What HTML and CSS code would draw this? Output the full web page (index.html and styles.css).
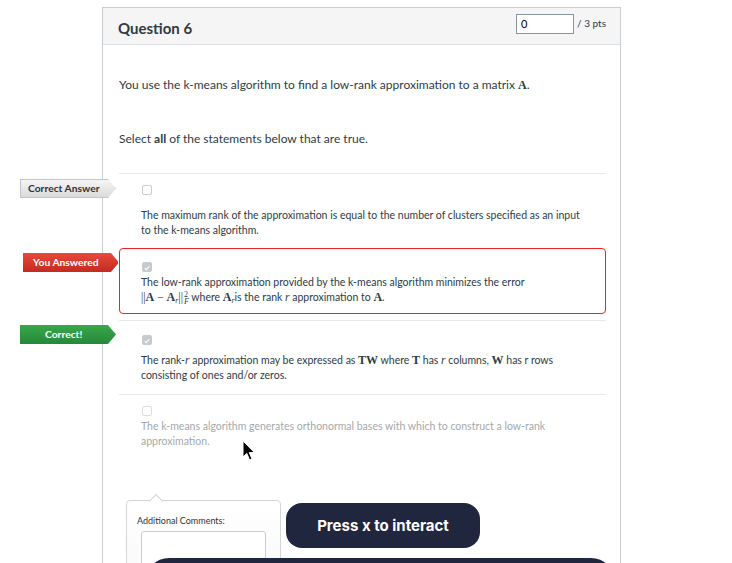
FILE: index.html
```html
<!DOCTYPE html>
<html>
<head>
<meta charset="utf-8">
<link rel="stylesheet" href="styles.css">
</head>
<body>
<div class="page">
  <div class="question">
    <div class="q-header">
      <span class="q-title">Question 6</span>
      <span class="q-points"><span class="pts-input">0</span><span class="pts-total">/ 3 pts</span></span>
    </div>
    <div class="q-body">
      <p class="q-text">You use the k-means algorithm to find a low-rank approximation to a matrix <b class="m">A</b>.</p>
      <p class="q-text q-select">Select <b>all</b> of the statements below that are true.</p>
      <div class="answers">
        <div class="answer a1">
          <span class="tag tag-grey">Correct Answer</span>
          <span class="cb"></span>
          <div class="a-text">The maximum rank of the approximation is equal to the number of clusters specified as an input to the k-means algorithm.</div>
        </div>
        <div class="answer a2 wrong">
          <span class="tag tag-red">You Answered</span>
          <span class="cb checked"><svg viewBox="0 0 10 10" width="10" height="10"><path d="M2.3 5.2 L4.2 7.1 L7.8 2.8" fill="none" stroke="#fff" stroke-width="1.3"/></svg></span>
          <div class="a-text">The low-rank approximation provided by the k-means algorithm minimizes the error<br><span class="m">||<b>A</b> − <b>A</b><sub class="i">r</sub>||<span class="supsub"><span class="ss">2</span><span class="ss i">F</span></span></span> where <b class="m">A</b><sub class="i">r</sub>is the rank <i class="m">r</i> approximation to <b class="m">A</b>.</div>
        </div>
        <div class="answer a3">
          <span class="tag tag-green">Correct!</span>
          <span class="cb checked"><svg viewBox="0 0 10 10" width="10" height="10"><path d="M2.3 5.2 L4.2 7.1 L7.8 2.8" fill="none" stroke="#fff" stroke-width="1.3"/></svg></span>
          <div class="a-text">The rank-<i class="m">r</i> approximation may be expressed as <b class="m">TW</b> where <b class="m">T</b> has <i class="m">r</i> columns, <b class="m">W</b> has r rows consisting of ones and/or zeros.</div>
        </div>
        <div class="answer a4 muted">
          <span class="cb"></span>
          <div class="a-text">The k-means algorithm generates orthonormal bases with which to construct a low-rank approximation.</div>
        </div>
      </div>
      <div class="comments">
        <div class="popover">
          <span class="popover-label">Additional Comments:</span>
          <div class="textarea"></div>
        </div>
        <div class="pill">Press x to interact</div>
        <div class="pill-wide"></div>
      </div>
    </div>
  </div>
  <svg class="cursor" width="14" height="22" viewBox="0 0 14 22"><path d="M1 1 L1 17 L4.8 13.4 L7.6 20 L10 19 L7.3 12.6 L12.5 12.6 Z" fill="#000" stroke="#fff" stroke-width="1"/></svg>
</div>
</body>
</html>
```

FILE: styles.css
```css
* { box-sizing: border-box; }
html, body { margin: 0; padding: 0; background: #fff; }
body { font-family: Lato, "Noto Sans", sans-serif; color: #2d3b45; width: 732px; height: 563px; overflow: hidden; }
.page { position: relative; padding: 7px 0 0 102px; height: 563px; overflow: hidden; }
.question { width: 519px; height: 600px; border: 1px solid #c7cdd1; border-bottom: none; }
.q-header { height: 37px; background: #f5f5f5; border-bottom: 1px solid #dcdfe2; display: flex; justify-content: space-between; align-items: flex-start; padding: 0 14px 0 15px; }
.q-title { font-size: 15px; font-weight: 700; margin-top: 11px; color: #2d3b45; }
.q-points { display: flex; align-items: flex-start; margin-top: 6px; }
.pts-input { width: 58px; height: 20px; border: 1px solid #8a959d; background: #fff; font-size: 11px; padding: 3px 0 0 4px; color: #000; line-height: 12px; margin-left: -2px; }
.pts-total { font-size: 10px; margin: 3px 0 0 3px; color: #2d3b45; }
.q-body { padding: 0 14px 0 16px; }
.q-text { margin: 0; font-size: 12px; line-height: 16px; }
.q-text:first-child { margin-top: 32px; }
.q-select { margin-top: 38px; }
.m { font-family: "Liberation Serif", "DejaVu Serif", serif; font-size: 11.5px; }
b.m, .m b { font-weight: 700; font-size: 12px; }
i.m, .i { font-style: italic; font-family: "Liberation Serif", "DejaVu Serif", serif; }
sub.i { font-size: 8px; vertical-align: -2px; line-height: 0; }
.supsub { display: inline-block; vertical-align: -3px; margin-left: 1px; line-height: 7px; font-size: 8px; }
.ss { display: block; }
.answers { margin-top: 26px; border-top: 1px solid #e6e8ea; }
.answer { position: relative; display: flex; flex-direction: column; align-items: flex-start; padding-left: 22px; }
.cb { width: 10px; height: 10px; border: 1px solid #c9cdd0; border-radius: 2px; background: #fff; margin-left: 1px; display: flex; }
.cb.checked { background: #c8cbce; border-color: #c8cbce; }
.a-text { font-size: 10.5px; line-height: 15px; color: #2d3b45; max-width: 450px; }
.a1 { padding-top: 11px; }
.a1 .a-text { margin-top: 13px; }
.a2 { margin-top: 10px; border: 1px solid #ee2222; border-radius: 4px; padding: 13px 0 8px 21px; margin-bottom: 6px; }
.a2 .a-text { margin-top: 3px; }
.a3 { border-top: 1px solid #e6e8ea; padding-top: 14px; padding-bottom: 11px; }
.a3 .a-text { margin-top: 8px; }
.a4 { border-top: 1px solid #e6e8ea; padding-top: 11px; }
.a4 .a-text { margin-top: 3px; color: #a3a8ac; }
.a4 .cb { border-color: #dcdfe1; }
.tag { position: absolute; left: -99px; height: 19px; width: 96px; font-size: 10.3px; line-height: 19px; padding-left: 8px; clip-path: polygon(0 0, 88px 0, 96px 50%, 88px 100%, 0 100%); }
.tag-grey { top: 5px; background: linear-gradient(#f7f7f7, #d9d9d9); color: #333; font-weight: 700; box-shadow: inset 0 0 0 1px #c4c4c4; }
.tag-red { top: 4px; left: -97px; width: 95px; background: linear-gradient(#e84a3c, #c42a20); color: #fff; font-weight: 700; padding-left: 10px; }
.tag-green { top: 4px; background: linear-gradient(#38a84a, #25883a); color: #fff; font-weight: 700; padding-left: 25px; }
.comments { position: relative; margin-top: 51px; height: 120px; }
.popover { position: relative; margin-left: 7px; width: 155px; height: 100px; border: 1px solid #d3d6d9; border-radius: 4px; background: linear-gradient(#fff, #f7f8f9); padding: 14px 0 0 10px; }
.popover::before { content: ""; position: absolute; top: -5px; left: 24px; width: 9px; height: 9px; background: #fff; border-left: 1px solid #d3d6d9; border-top: 1px solid #d3d6d9; transform: rotate(45deg); }
.popover-label { font-size: 9px; color: #333; display: block; }
.textarea { margin: 5px 0 0 4px; width: 125px; height: 60px; border: 1px solid #c9cdd0; border-radius: 3px; background: #fff; }
.pill { position: absolute; left: 167px; top: 3px; width: 194px; height: 45px; border-radius: 16px; background: #21263f; color: #fff; font-family: Inter, "Noto Sans", sans-serif; font-weight: 700; font-size: 15px; display: flex; align-items: center; justify-content: center; }
.pill-wide { position: absolute; left: 26px; top: 58px; width: 470px; height: 60px; border-radius: 24px; background: #21263f; }
.cursor { position: absolute; left: 242px; top: 440px; }
```
